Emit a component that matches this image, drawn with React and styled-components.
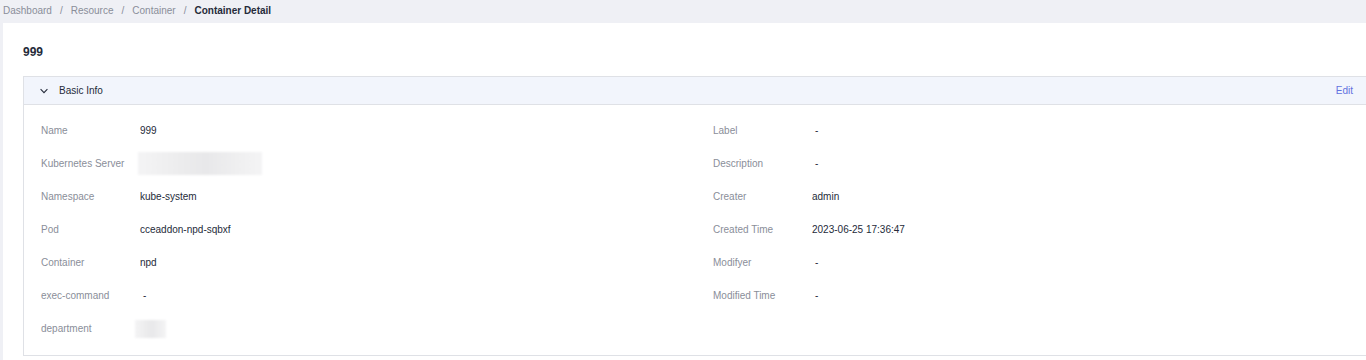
import React from 'react';
import styled, { createGlobalStyle } from 'styled-components';

const GlobalStyle = createGlobalStyle`
  html, body {
    margin: 0;
    padding: 0;
    background: #eff0f5;
    font-family: "Liberation Sans", Arial, sans-serif;
    font-size: 10px;
    color: #252b3a;
  }
`;

const Page = styled.div`
  padding: 0 0 0 3px;
  height: 360px;
  overflow: hidden;
`;

const Breadcrumb = styled.div`
  height: 23px;
  display: flex;
  align-items: center;
  padding-bottom: 3px;
  box-sizing: border-box;
  color: #8a8e99;
  font-size: 10px;
  white-space: nowrap;
`;

const Crumb = styled.span`
  color: ${p => (p.$current ? '#252b3a' : '#8a8e99')};
  font-weight: ${p => (p.$current ? 700 : 400)};
`;

const Sep = styled.span`
  margin: 0 8px;
  color: #8a8e99;
`;

const Card = styled.div`
  background: #fff;
  padding: 21px 0 0 20px;
  min-height: 340px;
`;

const Title = styled.h2`
  margin: 0 0 16px;
  height: 16px;
  line-height: 16px;
  font-size: 12px;
  font-weight: 700;
  color: #252b3a;
`;

const Panel = styled.div`
  border: 1px solid #dfe1e6;
  border-right: none;
`;

const PanelHeader = styled.div`
  height: 27px;
  display: flex;
  align-items: center;
  padding: 0 13px 0 16px;
  background: #f2f5fc;
  border-bottom: 1px solid #dfe1e6;
`;

const HeaderTitle = styled.span`
  flex: 1;
  margin-left: 11px;
  color: #252b3a;
`;

const EditLink = styled.a`
  color: #6272e0;
  cursor: pointer;
`;

const Body = styled.div`
  display: grid;
  grid-template-columns: 1fr 1fr;
  padding: 9px 0 10px;
`;

const Column = styled.div`
  padding-left: ${p => p.$pad}px;
`;

const Row = styled.div`
  height: 33px;
  display: flex;
  align-items: center;
  white-space: nowrap;
`;

const Label = styled.span`
  width: 99px;
  flex-shrink: 0;
  color: #8a8e99;
`;

const Value = styled.span`
  color: #252b3a;
  padding-left: ${p => (p.$dash ? 3 : 0)}px;
`;

const Blur = styled.div`
  width: ${p => p.$w}px;
  height: ${p => p.$h}px;
  margin-left: ${p => p.$ml}px;
  background: linear-gradient(90deg, #f4f4f5 0%, #ececed 35%, #e8e8ea 55%, #efeff0 80%, #f4f4f5 100%);
  filter: blur(1px);
`;

const Chevron = () => (
  <svg width="8" height="8" viewBox="0 0 8 8">
    <path d="M0.6 2.2 L4 5.6 L7.4 2.2" fill="none" stroke="#252b3a" strokeWidth="1.1" />
  </svg>
);

const left = [
  ['Name', '999'],
  ['Kubernetes Server', { blur: [124, 23, -2] }],
  ['Namespace', 'kube-system'],
  ['Pod', 'cceaddon-npd-sqbxf'],
  ['Container', 'npd'],
  ['exec-command', '-'],
  ['department', { blur: [31, 18, -5] }],
];

const right = [
  ['Label', '-'],
  ['Description', '-'],
  ['Creater', 'admin'],
  ['Created Time', '2023-06-25 17:36:47'],
  ['Modifyer', '-'],
  ['Modified Time', '-'],
];

const renderRows = rows =>
  rows.map(([label, val]) => (
    <Row key={label}>
      <Label>{label}</Label>
      {typeof val === 'string' ? (
        <Value $dash={val === '-'}>{val}</Value>
      ) : (
        <Blur $w={val.blur[0]} $h={val.blur[1]} $ml={val.blur[2]} />
      )}
    </Row>
  ));

export default function App() {
  return (
    <Page>
      <GlobalStyle />
      <Breadcrumb>
        <Crumb>Dashboard</Crumb>
        <Sep>/</Sep>
        <Crumb>Resource</Crumb>
        <Sep>/</Sep>
        <Crumb>Container</Crumb>
        <Sep>/</Sep>
        <Crumb $current>Container Detail</Crumb>
      </Breadcrumb>
      <Card>
        <Title>999</Title>
        <Panel>
          <PanelHeader>
            <Chevron />
            <HeaderTitle>Basic Info</HeaderTitle>
            <EditLink>Edit</EditLink>
          </PanelHeader>
          <Body>
            <Column $pad={17}>{renderRows(left)}</Column>
            <Column $pad={18}>{renderRows(right)}</Column>
          </Body>
        </Panel>
      </Card>
    </Page>
  );
}
